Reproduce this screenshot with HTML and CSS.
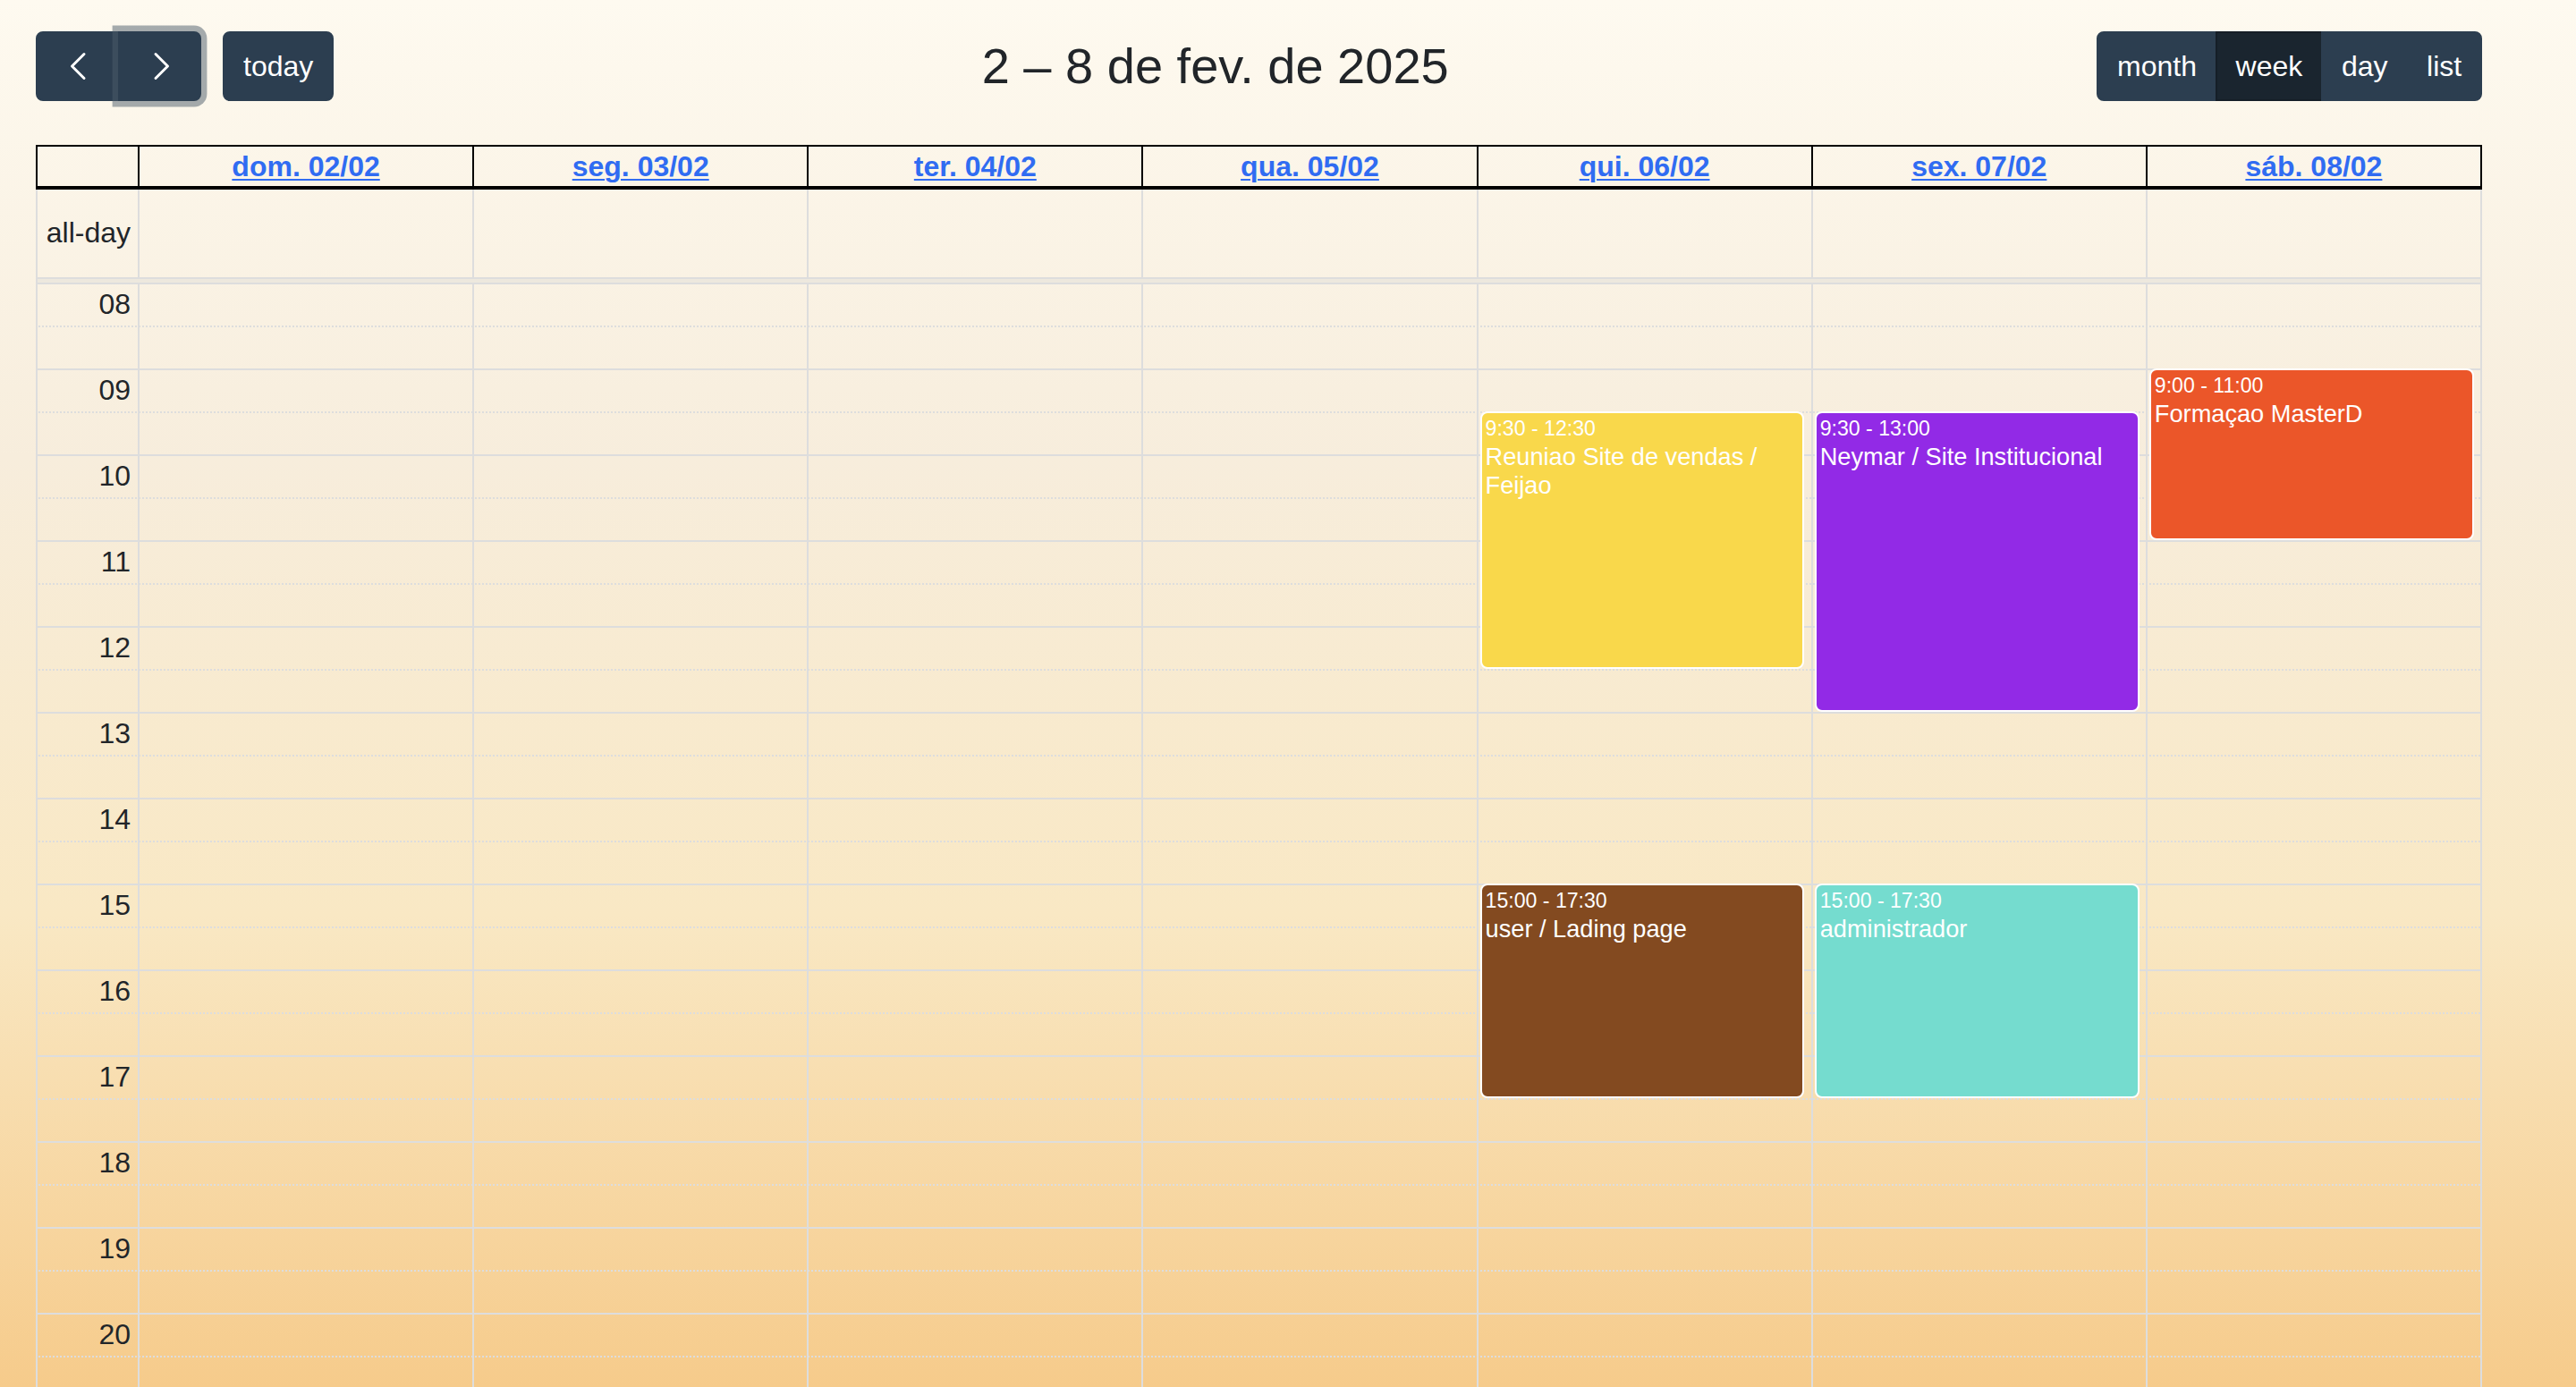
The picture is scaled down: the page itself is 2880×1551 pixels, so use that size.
FILE: index.html
```html
<!DOCTYPE html>
<html lang="pt-BR">
<head>
<meta charset="utf-8">
<title>Calendário</title>
<link rel="stylesheet" href="styles.css">
</head>
<body>
<div class="page">
  <div class="toolbar">
    <div class="chunk">
      <div class="btn-group">
        <button class="btn btn-icon" aria-label="prev"><svg width="48" height="48" viewBox="0 0 48 48"><polyline points="31,10.5 17.5,24 31,37.5" fill="none" stroke="#fff" stroke-width="3" stroke-linecap="round" stroke-linejoin="round"/></svg></button>
        <button class="btn btn-icon focus" aria-label="next"><svg width="48" height="48" viewBox="0 0 48 48"><polyline points="20,10.5 33.5,24 20,37.5" fill="none" stroke="#fff" stroke-width="3" stroke-linecap="round" stroke-linejoin="round"/></svg></button>
      </div>
      <button class="btn today">today</button>
    </div>
    <h2 class="title">2 – 8 de fev. de 2025</h2>
    <div class="chunk">
      <div class="btn-group">
        <button class="btn">month</button>
        <button class="btn active">week</button>
        <button class="btn">day</button>
        <button class="btn">list</button>
      </div>
    </div>
  </div>

  <div class="calendar">
    <div class="head">
      <div class="head-cell"></div>
      <div class="head-cell"><a href="#">dom. 02/02</a></div>
      <div class="head-cell"><a href="#">seg. 03/02</a></div>
      <div class="head-cell"><a href="#">ter. 04/02</a></div>
      <div class="head-cell"><a href="#">qua. 05/02</a></div>
      <div class="head-cell"><a href="#">qui. 06/02</a></div>
      <div class="head-cell"><a href="#">sex. 07/02</a></div>
      <div class="head-cell"><a href="#">sáb. 08/02</a></div>
    </div>

    <div class="allday">
      <div class="allday-label">all-day</div>
      <div class="allday-cell"></div>
      <div class="allday-cell"></div>
      <div class="allday-cell"></div>
      <div class="allday-cell"></div>
      <div class="allday-cell"></div>
      <div class="allday-cell"></div>
      <div class="allday-cell"></div>
    </div>
    <div class="divider"></div>

    <div class="slots">
      <div class="slot hour"><div class="slot-label">08</div></div>
      <div class="slot half"><div class="slot-label"></div></div>
      <div class="slot hour"><div class="slot-label">09</div></div>
      <div class="slot half"><div class="slot-label"></div></div>
      <div class="slot hour"><div class="slot-label">10</div></div>
      <div class="slot half"><div class="slot-label"></div></div>
      <div class="slot hour"><div class="slot-label">11</div></div>
      <div class="slot half"><div class="slot-label"></div></div>
      <div class="slot hour"><div class="slot-label">12</div></div>
      <div class="slot half"><div class="slot-label"></div></div>
      <div class="slot hour"><div class="slot-label">13</div></div>
      <div class="slot half"><div class="slot-label"></div></div>
      <div class="slot hour"><div class="slot-label">14</div></div>
      <div class="slot half"><div class="slot-label"></div></div>
      <div class="slot hour"><div class="slot-label">15</div></div>
      <div class="slot half"><div class="slot-label"></div></div>
      <div class="slot hour"><div class="slot-label">16</div></div>
      <div class="slot half"><div class="slot-label"></div></div>
      <div class="slot hour"><div class="slot-label">17</div></div>
      <div class="slot half"><div class="slot-label"></div></div>
      <div class="slot hour"><div class="slot-label">18</div></div>
      <div class="slot half"><div class="slot-label"></div></div>
      <div class="slot hour"><div class="slot-label">19</div></div>
      <div class="slot half"><div class="slot-label"></div></div>
      <div class="slot hour"><div class="slot-label">20</div></div>
      <div class="slot half"><div class="slot-label"></div></div>

      <div class="cols">
        <div class="col axis"></div>
        <div class="col"><div class="col-events"></div></div>
        <div class="col"><div class="col-events"></div></div>
        <div class="col"><div class="col-events"></div></div>
        <div class="col"><div class="col-events"></div></div>
        <div class="col">
          <div class="col-events">
            <div class="event ev-yellow" style="top:146px;height:284px">
              <div class="event-time">9:30 - 12:30</div>
              <div class="event-title">Reuniao Site de vendas / Feijao</div>
            </div>
            <div class="event ev-brown" style="top:674px;height:236px">
              <div class="event-time">15:00 - 17:30</div>
              <div class="event-title">user / Lading page</div>
            </div>
          </div>
        </div>
        <div class="col">
          <div class="col-events">
            <div class="event ev-purple" style="top:146px;height:332px">
              <div class="event-time">9:30 - 13:00</div>
              <div class="event-title">Neymar / Site Institucional</div>
            </div>
            <div class="event ev-cyan" style="top:674px;height:236px">
              <div class="event-time">15:00 - 17:30</div>
              <div class="event-title">administrador</div>
            </div>
          </div>
        </div>
        <div class="col">
          <div class="col-events">
            <div class="event ev-orange" style="top:98px;height:188px">
              <div class="event-time">9:00 - 11:00</div>
              <div class="event-title">Formaçao MasterD</div>
            </div>
          </div>
        </div>
      </div>
    </div>
  </div>
</div>
</body>
</html>
```

FILE: styles.css
```css
html, body {
  margin: 0;
  padding: 0;
}

body {
  font-family: "Liberation Sans", Arial, Helvetica, sans-serif;
  font-size: 32px;
  color: #212529;
}

.page {
  height: 100vh;
  overflow: hidden;
  box-sizing: border-box;
  padding: 35px 105px 0 40px;
  background: linear-gradient(180deg, #fefaf0 0%, #f7eddc 33%, #f9e8c4 66%, #f6cb8b 100%);
}

/* ---------- toolbar ---------- */
.toolbar {
  display: flex;
  justify-content: space-between;
  align-items: center;
  margin-bottom: 49px;
}

.chunk {
  display: flex;
  align-items: center;
}

.btn-group {
  display: flex;
}

.btn {
  font-family: inherit;
  font-size: 32px;
  line-height: 48px;
  padding: 12.8px 20.8px;
  border: 2px solid #2c3e50;
  background: #2c3e50;
  color: #fff;
  border-radius: 8px;
  display: inline-flex;
  align-items: center;
  justify-content: center;
  cursor: pointer;
}

.btn svg {
  display: block;
}

.btn-group .btn {
  border-radius: 0;
}

.btn-group .btn:first-child {
  border-top-left-radius: 8px;
  border-bottom-left-radius: 8px;
}

.btn-group .btn:last-child {
  border-top-right-radius: 8px;
  border-bottom-right-radius: 8px;
}

.btn-group .btn + .btn {
  margin-left: -2px;
}

.btn.active {
  background: #1a252f;
  border-color: #151e27;
}

.btn.focus {
  position: relative;
  z-index: 1;
  box-shadow: 0 0 0 6.4px rgba(76, 91, 106, 0.5);
}

.today {
  margin-left: 24px;
}

.title {
  margin: 0;
  font-size: 56px;
  font-weight: normal;
  line-height: normal;
  color: #212529;
}

/* ---------- header ---------- */
.head {
  display: grid;
  grid-template-columns: 114px repeat(7, 1fr);
  border-top: 2px solid #000;
  border-bottom: 4px solid #000;
  border-right: 2px solid #000;
}

.head-cell {
  border-left: 2px solid #000;
  text-align: center;
  padding: 4px 8px;
  line-height: 36px;
  font-weight: bold;
}

.head-cell a {
  color: #306cf2;
  text-decoration: underline;
  text-decoration-thickness: 2px;
  text-underline-offset: 3px;
}

/* ---------- all-day ---------- */
.allday {
  display: grid;
  grid-template-columns: 114px repeat(7, 1fr);
  height: 98px;
  border-right: 2px solid #ddd;
  border-bottom: 2px solid #ddd;
}

.allday-label,
.allday-cell {
  border-left: 2px solid #ddd;
}

.allday-label {
  display: flex;
  align-items: center;
  justify-content: flex-end;
  padding: 0 8px;
}

.divider {
  height: 4px;
  background: rgba(208, 208, 208, 0.3);
  border-left: 2px solid #ddd;
  border-right: 2px solid #ddd;
}

/* ---------- time grid ---------- */
.slots {
  position: relative;
  border-right: 2px solid #ddd;
}

.slot {
  display: grid;
  grid-template-columns: 114px 1fr;
  height: 48px;
  box-sizing: border-box;
  border-top: 2px solid #ddd;
}

.slot.half {
  border-top-style: dotted;
}

.slot-label {
  text-align: right;
  padding-right: 8px;
  line-height: 44px;
}

.cols {
  position: absolute;
  inset: 0;
  display: grid;
  grid-template-columns: 114px repeat(7, 1fr);
}

.col {
  border-left: 2px solid #ddd;
}

.col-events {
  position: relative;
  height: 100%;
  margin: 0 2.5% 0 4px;
}

.event {
  position: absolute;
  left: 0;
  right: 0;
  box-sizing: border-box;
  border: 2px solid;
  border-radius: 6px;
  box-shadow: 0 0 0 2px #fff;
  padding: 2px 2px 0;
  color: #fff;
  font-size: 27.2px;
  line-height: normal;
  overflow: hidden;
}

.event-time {
  font-size: 23.1px;
  margin-bottom: 2px;
  white-space: nowrap;
}

.ev-yellow { background: #f9d84b; border-color: #f9d84b; }
.ev-brown  { background: #834a20; border-color: #834a20; }
.ev-purple { background: #922ae6; border-color: #922ae6; }
.ev-cyan   { background: #75dccf; border-color: #75dccf; }
.ev-orange { background: #eb5629; border-color: #eb5629; }
```
